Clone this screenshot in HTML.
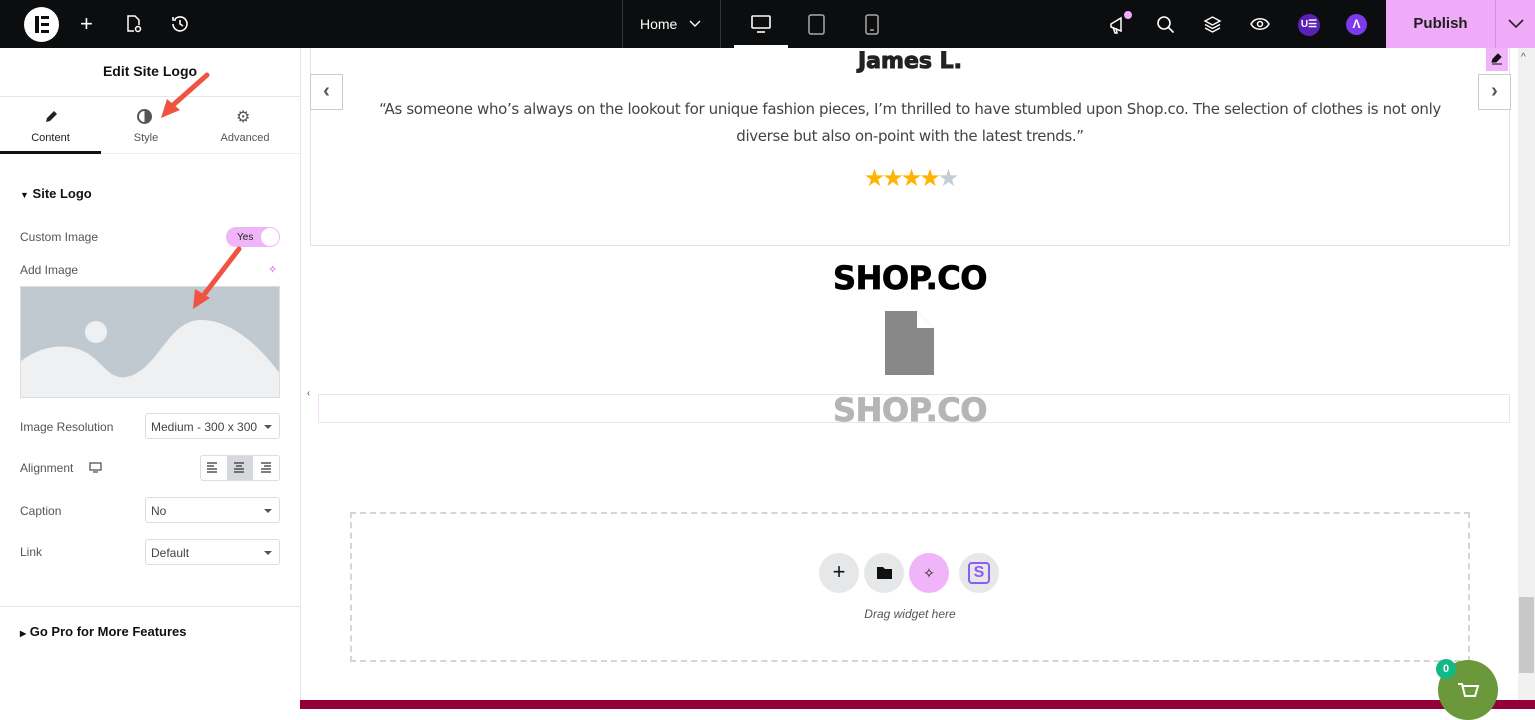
<!DOCTYPE html>
<html><head><meta charset="utf-8"><style>
*{box-sizing:border-box;margin:0;padding:0}
body{width:1535px;height:709px;overflow:hidden;background:#fff;font-family:"Liberation Sans",sans-serif;position:relative;color:#333}
.a{position:absolute}
.top{left:0;top:0;width:1535px;height:48px;background:#0c0d0e}
.lbl{font-size:12px;color:#555}
.sel{position:absolute;left:145px;width:135px;height:26px;border:1px solid #ddd;border-radius:3px;font-size:12px;color:#444;padding:6px 5px}
.sel:after{content:"";position:absolute;right:7px;top:11px;border:4px solid transparent;border-top:4px solid #555}
.circ{position:absolute;width:40px;height:40px;border-radius:50%;background:#e6e7e8;top:553px}
</style></head><body>
<div class="a top"></div>
<div class="a" style="left:24px;top:7px;width:35px;height:35px;border-radius:50%;background:#fff"></div>
<div class="a" style="left:35px;top:16px;width:4px;height:17px;background:#0c0d0e"></div>
<div class="a" style="left:41px;top:16px;width:8px;height:3px;background:#0c0d0e"></div>
<div class="a" style="left:41px;top:23px;width:8px;height:3px;background:#0c0d0e"></div>
<div class="a" style="left:41px;top:30px;width:8px;height:3px;background:#0c0d0e"></div>
<div class="a" style="left:80px;top:12px;color:#fff;font-size:22px;line-height:24px">+</div>
<svg class="a" style="left:124px;top:14px" width="20" height="20" viewBox="0 0 20 20" fill="none" stroke="#fff" stroke-width="1.5"><path d="M10 17H4V2h7l4 4v5"/><circle cx="14" cy="15" r="2.5"/></svg>
<svg class="a" style="left:170px;top:14px" width="20" height="20" viewBox="0 0 20 20" fill="none" stroke="#fff" stroke-width="1.6"><path d="M3 10a7 7 0 1 0 2-5M3 3v3h3M10 6v4l3 2"/></svg>
<div class="a" style="left:622px;top:0;width:1px;height:48px;background:#333"></div>
<div class="a" style="left:720px;top:0;width:1px;height:48px;background:#333"></div>
<div class="a" style="left:640px;top:16px;color:#fff;font-size:14px">Home</div>
<svg class="a" style="left:689px;top:20px" width="12" height="8" viewBox="0 0 12 8" fill="none" stroke="#fff" stroke-width="1.4"><path d="M1 1l5 5 5-5"/></svg>
<svg class="a" style="left:751px;top:15px" width="20" height="18" viewBox="0 0 20 18" fill="none" stroke="#fff" stroke-width="1.6"><rect x="1" y="1" width="18" height="12" rx="1"/><path d="M6 17h8"/></svg>
<div class="a" style="left:734px;top:45px;width:54px;height:3px;background:#fff"></div>
<svg class="a" style="left:808px;top:14px" width="18" height="21" viewBox="0 0 18 21" fill="none" stroke="#aaa" stroke-width="1.5"><rect x="1" y="1" width="15" height="19" rx="2"/></svg>
<svg class="a" style="left:865px;top:14px" width="14" height="21" viewBox="0 0 14 21" fill="none" stroke="#aaa" stroke-width="1.5"><rect x="1" y="1" width="12" height="19" rx="2"/><path d="M5 16h4"/></svg>
<svg class="a" style="left:1108px;top:14px" width="22" height="22" viewBox="0 0 22 22" fill="none" stroke="#fff" stroke-width="1.5"><path d="M3 10l10-6v13L3 13zM5 13l2 6h2l-1-5"/></svg>
<div class="a" style="left:1124px;top:11px;width:8px;height:8px;border-radius:50%;background:#f0abfc"></div>
<svg class="a" style="left:1156px;top:15px" width="19" height="19" viewBox="0 0 19 19" fill="none" stroke="#fff" stroke-width="1.6"><circle cx="8" cy="8" r="6"/><path d="M12.5 12.5l5 5"/></svg>
<svg class="a" style="left:1203px;top:15px" width="19" height="19" viewBox="0 0 19 19" fill="none" stroke="#fff" stroke-width="1.4"><path d="M9.5 2l7.5 4-7.5 4L2 6zM2 9.5l7.5 4 7.5-4M2 13l7.5 4 7.5-4"/></svg>
<svg class="a" style="left:1250px;top:17px" width="20" height="14" viewBox="0 0 20 14" fill="none" stroke="#fff" stroke-width="1.5"><path d="M1 7c4-7 14-7 18 0-4 7-14 7-18 0z"/><circle cx="10" cy="7" r="2.5"/></svg>
<div class="a" style="left:1298px;top:14px;width:22px;height:22px;border-radius:50%;background:#5b21b6;color:#fff;font-size:10px;font-weight:bold;text-align:center;line-height:22px">U☰</div>
<div class="a" style="left:1346px;top:14px;width:21px;height:21px;border-radius:50%;background:#7c3aed;color:#fff;font-size:12px;font-weight:bold;text-align:center;line-height:21px">Λ</div>
<div class="a" style="left:1386px;top:0;width:149px;height:48px;background:#efabf7"></div>
<div class="a" style="left:1495px;top:0;width:1px;height:48px;background:#d88ee2"></div>
<div class="a" style="left:1386px;top:15px;width:109px;text-align:center;font-size:15px;font-weight:bold;color:#1f1f1f">Publish</div>
<svg class="a" style="left:1508px;top:19px" width="16" height="10" viewBox="0 0 16 10" fill="none" stroke="#222" stroke-width="1.6"><path d="M1 1l7 7 7-7"/></svg>

<div class="a" style="left:300px;top:48px;width:1px;height:661px;background:#e6e6e6"></div>
<div class="a" style="left:0;top:63px;width:300px;text-align:center;font-size:14px;font-weight:bold;color:#111">Edit Site Logo</div>
<div class="a" style="left:0;top:96px;width:300px;height:1px;background:#e6e6e6"></div>
<div class="a" style="left:0;top:153px;width:300px;height:1px;background:#eee"></div>
<svg class="a" style="left:44px;top:110px" width="14" height="14" viewBox="0 0 14 14"><path d="M2 12l1-4 7-7 3 3-7 7z" fill="#222"/></svg>
<div class="a" style="left:137px;top:109px;width:15px;height:15px;border-radius:50%;border:2px solid #555;background:linear-gradient(90deg,#fff 50%,#555 50%)"></div>
<div class="a" style="left:236px;top:107px;font-size:16px;color:#555">⚙</div>
<div class="a" style="left:0;top:132px;width:101px;text-align:center;font-size:11px;color:#222">Content</div>
<div class="a" style="left:101px;top:132px;width:90px;text-align:center;font-size:11px;color:#555">Style</div>
<div class="a" style="left:200px;top:132px;width:90px;text-align:center;font-size:11px;color:#555">Advanced</div>
<div class="a" style="left:0;top:151px;width:101px;height:3px;background:#111"></div>
<div class="a" style="left:20px;top:186px;font-size:13px;font-weight:bold;color:#111"><span style="font-size:9px">▼</span> Site Logo</div>
<div class="a lbl" style="left:20px;top:230px">Custom Image</div>
<div class="a" style="left:226px;top:227px;width:54px;height:20px;border-radius:10px;background:#f0b4f8;font-size:10px;color:#222;padding:5px 0 0 11px">Yes</div>
<div class="a" style="left:261px;top:228px;width:18px;height:18px;border-radius:50%;background:#fff"></div>
<div class="a lbl" style="left:20px;top:263px">Add Image</div>
<div class="a" style="left:268px;top:263px;color:#d63ae0;font-size:11px">✧</div>
<svg class="a" style="left:20px;top:286px" width="260" height="112" viewBox="0 0 260 112"><rect width="260" height="112" fill="#c1c9d0"/><circle cx="76" cy="46" r="11" fill="#eef0f2"/><path d="M0 76C20 60 45 56 65 66S90 100 115 88 150 35 180 34 240 60 260 88V112H0z" fill="#eef0f2"/><rect x=".5" y=".5" width="259" height="111" fill="none" stroke="#ddd"/></svg>
<div class="a lbl" style="left:20px;top:420px">Image Resolution</div>
<div class="sel" style="top:413px">Medium - 300 x 300</div>
<div class="a lbl" style="left:20px;top:461px">Alignment</div>
<svg class="a" style="left:89px;top:462px" width="13" height="11" viewBox="0 0 13 11" fill="none" stroke="#555" stroke-width="1.3"><rect x="1" y="1" width="11" height="7"/><path d="M4 10h5"/></svg>
<div class="a" style="left:200px;top:455px;width:80px;height:26px;border:1px solid #ddd;border-radius:3px"></div>
<div class="a" style="left:227px;top:456px;width:26px;height:24px;background:#d5d8dc"></div>
<svg class="a" style="left:207px;top:462px" width="66" height="12" viewBox="0 0 66 12" stroke="#333" stroke-width="1.2"><path d="M0 1h10M0 4h7M0 7h10M0 10h10"/><path d="M27 1h10M29 4h6M27 7h10M27 10h10"/><path d="M54 1h10M57 4h7M54 7h10M54 10h10"/></svg>
<div class="a lbl" style="left:20px;top:504px">Caption</div>
<div class="sel" style="top:497px">No</div>
<div class="a lbl" style="left:20px;top:545px">Link</div>
<div class="sel" style="top:539px">Default</div>
<div class="a" style="left:0;top:606px;width:300px;height:1px;background:#e6e6e6"></div>
<div class="a" style="left:20px;top:624px;font-size:13px;font-weight:bold;color:#111"><span style="font-size:8px">▶</span> Go Pro for More Features</div>
<svg class="a" style="left:0;top:0" width="300" height="320"><g stroke="#f0533f" stroke-width="5" stroke-linecap="round" fill="#f0533f"><path d="M207 75L172 106"/><path d="M239 249L203 296"/></g><path d="M161 118l6-19 13 11z" fill="#f0533f"/><path d="M193 309l2-20 15 9z" fill="#f0533f"/></svg>

<div class="a" style="left:301px;top:380px;width:15px;height:28px;background:#fff;border-radius:0 4px 4px 0;font-size:10px;color:#555;text-align:center;line-height:28px">‹</div>
<div class="a" style="left:310px;top:48px;width:1200px;height:198px;border:1px solid #ecdcef;border-top:none"></div>
<div class="a" style="left:310px;top:74px;width:33px;height:36px;border:1px solid #ccc;background:#fff;color:#555;text-align:center;font-size:20px;line-height:32px;font-weight:bold">‹</div>
<div class="a" style="left:1478px;top:74px;width:33px;height:36px;border:1px solid #ccc;background:#fff;color:#555;text-align:center;font-size:20px;line-height:32px;font-weight:bold">›</div>
<div class="a" style="left:1486px;top:48px;width:22px;height:23px;background:#f0b4f8"></div>
<svg class="a" style="left:1491px;top:53px" width="12" height="12" viewBox="0 0 12 12"><path d="M1 9l1-3 5-5 3 3-5 5zM1 11h10" fill="#111" stroke="#111"/></svg>
<div class="a" style="left:310px;top:49px;width:1200px;text-align:center;font-size:22px;font-weight:900;color:#222;font-family:'DejaVu Sans',sans-serif;-webkit-text-stroke:1px #222">James L.</div>
<div class="a" style="left:372px;top:96px;width:1076px;text-align:center;line-height:27px;color:#444;font-family:'DejaVu Sans',sans-serif;font-size:15px;letter-spacing:-0.35px">“As someone who’s always on the lookout for unique fashion pieces, I’m thrilled to have stumbled upon Shop.co. The selection of clothes is not only diverse but also on-point with the latest trends.”</div>
<div class="a" style="left:310px;top:164px;width:1200px;text-align:center;font-size:24px;color:#ffb400;letter-spacing:-3px">★★★★<span style="color:#c4ccd4">★</span></div>
<div class="a" style="left:310px;top:259px;width:1200px;text-align:center;font-size:32px;font-weight:900;color:#000;font-family:'DejaVu Sans',sans-serif;letter-spacing:-0.5px;-webkit-text-stroke:0.8px #000">SHOP.CO</div>
<svg class="a" style="left:885px;top:311px" width="49" height="64" viewBox="0 0 49 64"><path d="M0 0h32l17 17v47H0z" fill="#888"/><path d="M32 0v17h17z" fill="#fff"/></svg>
<div class="a" style="left:318px;top:394px;width:1192px;height:29px;border:1px solid #f5dcf7"></div>
<div class="a" style="left:310px;top:391px;width:1200px;text-align:center;font-size:32px;font-weight:900;color:#b5b5b5;font-family:'DejaVu Sans',sans-serif;letter-spacing:-0.5px;-webkit-text-stroke:0.8px #b5b5b5">SHOP.CO</div>
<div class="a" style="left:350px;top:512px;width:1120px;height:150px;border:2px dashed #d5d5d5"></div>
<div class="circ" style="left:819px;font-size:22px;text-align:center;line-height:38px;color:#111">+</div>
<div class="circ" style="left:864px"></div>
<svg class="a" style="left:877px;top:566px" width="15" height="13" viewBox="0 0 15 13"><path d="M0 1h6l2 2h7v10H0z" fill="#111"/></svg>
<div class="circ" style="left:909px;background:#f0b4f8;text-align:center;line-height:40px;font-size:14px;color:#111">✧</div>
<div class="circ" style="left:959px"></div>
<div class="a" style="left:968px;top:562px;width:22px;height:22px;border:2px solid #8b5cf6;border-radius:4px;color:#8b5cf6;font-weight:bold;font-size:16px;text-align:center;line-height:18px">S</div>
<div class="a" style="left:810px;top:607px;width:200px;text-align:center;font-size:12px;font-style:italic;color:#555">Drag widget here</div>
<div class="a" style="left:1518px;top:48px;width:17px;height:661px;background:#f1f1f1"></div>
<div class="a" style="left:1519px;top:597px;width:15px;height:76px;background:#c8c8c8"></div>
<div class="a" style="left:1521px;top:52px;font-size:10px;color:#555">^</div>
<div class="a" style="left:300px;top:700px;width:1235px;height:9px;background:#930038"></div>
<div class="a" style="left:1438px;top:660px;width:60px;height:60px;border-radius:50%;background:#6a983a"></div>
<svg class="a" style="left:1457px;top:680px" width="24" height="20" viewBox="0 0 24 20" fill="none" stroke="#fff" stroke-width="2"><path d="M1 4h4l3 12h10l3-10H6"/></svg>
<div class="a" style="left:1436px;top:659px;width:20px;height:20px;border-radius:50%;background:#13b887;color:#fff;font-size:11px;font-weight:bold;text-align:center;line-height:20px">0</div>
</body></html>
